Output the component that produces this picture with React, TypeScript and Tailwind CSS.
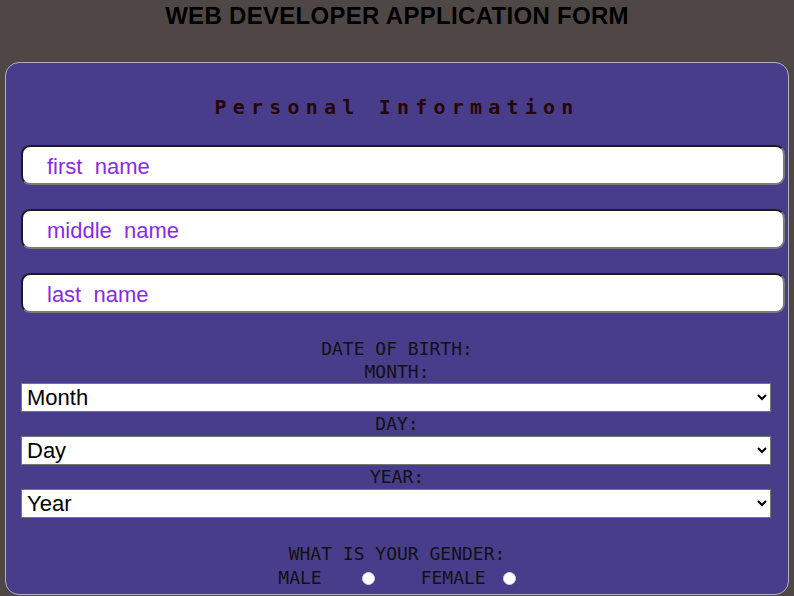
const mono = "font-['DejaVu_Sans_Mono',monospace]";

const TextField = ({ placeholder }: { placeholder: string }) => (
  <input
    type="text"
    placeholder={placeholder}
    className="ml-[15px] block h-[40px] w-[764px] rounded-[9px] border-2 border-t-[#1c1a22] border-l-[#1c1a22] border-r-[#7a7a7a] border-b-[#7a7a7a] bg-white pt-[3px] pl-[24px] font-['Liberation_Sans',Arial,sans-serif] text-[22px] text-[#8a2be2] placeholder:whitespace-pre placeholder:text-[#8a2be2]"
  />
);

const DateSelect = ({ label, options }: { label: string; options: string[] }) => (
  <select
    defaultValue={label}
    className="ml-[15px] block h-[29px] w-[750px] border border-[#767676] bg-white pl-[1px] font-['Liberation_Sans',Arial,sans-serif] text-[22px] text-black"
  >
    <option value={label}>{label}</option>
    {options.map((o) => (
      <option key={o} value={o}>
        {o}
      </option>
    ))}
  </select>
);

const months = ['January', 'February', 'March', 'April', 'May', 'June', 'July', 'August', 'September', 'October', 'November', 'December'];
const days = Array.from({ length: 31 }, (_, i) => String(i + 1));
const years = Array.from({ length: 40 }, (_, i) => String(2005 - i));

export default function App() {
  return (
    <main className="min-h-[596px] overflow-hidden bg-[#4f4745] pt-[2px]">
      <h1 className="text-center font-['Liberation_Sans',Arial,sans-serif] text-[24px] font-bold leading-[28px] tracking-[0.3px] text-black">
        WEB DEVELOPER APPLICATION FORM
      </h1>

      <form className="mt-[32px] ml-[5px] w-[784px] rounded-[14px] border border-[#b4b1bd] bg-[#483d8b] pt-[32px] pb-[4px]">
        <h2 className={`${mono} text-center text-[20px] font-semibold leading-[24px] tracking-[6.2px] text-[#260606]`}>
          Personal Information
        </h2>

        <div className="mt-[26px] flex flex-col gap-[24px]">
          <TextField placeholder="first  name" />
          <TextField placeholder="middle  name" />
          <TextField placeholder="last  name" />
        </div>

        <div className={`${mono} mt-[24px] text-center text-[18px] text-[#111]`}>
          <p className="leading-[23px]">DATE OF BIRTH:</p>
          <p className="leading-[23px]">MONTH:</p>
          <DateSelect label="Month" options={months} />
          <p className="leading-[24px]">DAY:</p>
          <DateSelect label="Day" options={days} />
          <p className="leading-[24px]">YEAR:</p>
          <DateSelect label="Year" options={years} />

          <p className="mt-[24px] leading-[24px]">WHAT IS YOUR GENDER:</p>
          <div className="flex items-center justify-center leading-[24px]">
            <label className="flex items-center">
              MALE
              <input
                type="radio"
                name="gender"
                className="ml-[40px] h-[13px] w-[13px] appearance-none rounded-full border border-[#d8d8d8] bg-white"
              />
            </label>
            <label className="ml-[46px] flex items-center">
              FEMALE
              <input
                type="radio"
                name="gender"
                className="ml-[17px] h-[13px] w-[13px] appearance-none rounded-full border border-[#d8d8d8] bg-white"
              />
            </label>
          </div>
        </div>
      </form>
    </main>
  );
}
